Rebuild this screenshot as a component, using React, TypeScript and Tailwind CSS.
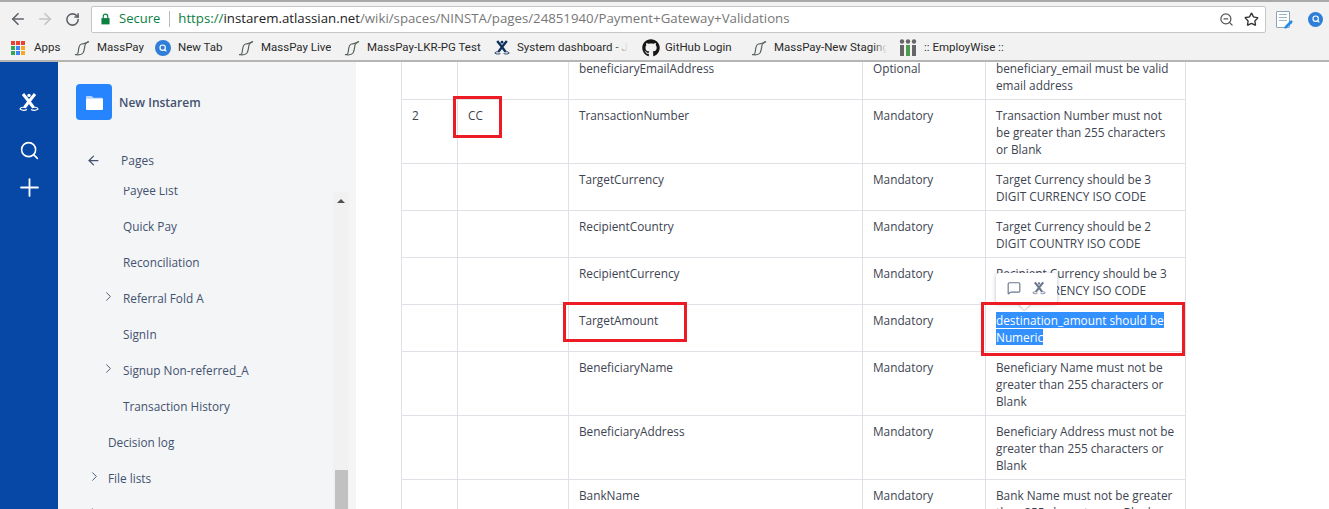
import React from 'react';
import { ArrowLeft, ArrowRight, RotateCw, Search, Star, ChevronRight, Plus, ZoomOut, MessageSquare, Pencil } from 'lucide-react';
import { FaGithub } from 'react-icons/fa';

const chromeFont = { fontFamily: 'Roboto, "Liberation Sans", sans-serif' };

function Atlassian({ className, color = '#fff' }: { className?: string; color?: string }) {
  return (
    <svg viewBox="0 0 20 20" className={className} fill="none" stroke={color}>
      <circle cx="10" cy="3.4" r="1.700" fill={color} stroke="none" />
      <path d="M4 2 10 9.500 14.500 15.500M16 2 10 9.500 5.500 15.500" strokeWidth="3" />
      <path d="M6 15.500C4 15 1.500 15.500 1 17c2 1.500 5 1.500 7 .5M14 15.500c2-.5 4.500 0 5 1.500-2 1.500-5 1.500-7 .5" strokeWidth="1.100" />
    </svg>
  );
}

function MassPayIcon() {
  return (
    <svg viewBox="0 0 16 16" className="w-[16px] h-[16px] shrink-0" fill="none" stroke="#59655c" strokeWidth="1.200">
      <path d="M1 14.500c2 .5 3-.5 3.300-3 .4-3.500.5-7 3.200-7.500 3-.5 5-.5 7.500-2.500" />
      <path d="M1 14.500c3 .5 6.500.5 8-1.500 1.500-2.500 1.500-5.500 2-8 .3-1.500 1.500-2.500 3.500-3.500" />
    </svg>
  );
}

function EmployWiseIcon() {
  return (
    <svg viewBox="0 0 18 17" className="w-[18px] h-[17px] shrink-0">
      <circle cx="3" cy="2.500" r="2.200" fill="#666" />
      <rect x="1" y="6" width="4" height="11" fill="#666" />
      <circle cx="9" cy="2.500" r="2.200" fill="#666" />
      <rect x="7" y="6" width="4" height="11" fill="#4f9a50" />
      <circle cx="15" cy="2.500" r="2.200" fill="#666" />
      <rect x="13" y="6" width="4" height="11" fill="#666" />
    </svg>
  );
}

function QuickSearchIcon({ size }: { size: string }) {
  return (
    <div className={`${size} shrink-0 rounded-full bg-[#2f7ed8] flex items-center justify-center`}>
      <Search className="w-[8px] h-[8px] text-white" strokeWidth={3.500} />
    </div>
  );
}

function Bookmark({ icon, label, width, clip }: { icon: React.ReactNode; label: string; width: string; clip?: string }) {
  return (
    <div className={`flex items-center shrink-0 ${width}`}>
      <div className="w-[23px] shrink-0 flex items-center">{icon}</div>
      <span className={`relative whitespace-nowrap overflow-hidden text-[11.5px] text-[#2a2a2a] ${clip ?? ''}`}>
        {label}
        {clip && <span className="absolute right-0 top-0 bottom-0 w-[14px] bg-gradient-to-r from-transparent to-[#f2f2f2]" />}
      </span>
    </div>
  );
}

const appsColors = ['#ea4335', '#ea4335', '#ea4335', '#34a853', '#4285f4', '#f9a825', '#34a853', '#4285f4', '#f9a825'];

function BrowserChrome() {
  return (
    <div className="h-[62px] bg-[#f2f2f2] shrink-0 flex flex-col" style={chromeFont}>
      <div className="h-[2px] bg-[#a9a9a9] shrink-0" />
      <div className="h-[31px] flex items-center pl-[9px] pt-[3px]">
        <ArrowLeft className="w-[18px] h-[18px] text-[#5f6368]" strokeWidth={2.200} />
        <ArrowRight className="w-[18px] h-[18px] ml-[9px] text-[#c4c4c4]" strokeWidth={2.200} />
        <RotateCw className="w-[15px] h-[15px] ml-[11px] text-[#5f6368]" strokeWidth={2.500} />
        <div className="ml-[11px] w-[1175px] h-[27px] bg-white border border-[#c6c6c6] rounded-[2px] flex items-center pl-[9px] pr-[6px]" style={{ fontFamily: '"Open Sans", sans-serif' }}>
          <svg viewBox="0 0 10 13" className="w-[9px] h-[12px] shrink-0">
            <path d="M2.500 6V3.500a2.500 2.500 0 0 1 5 0V6" fill="none" stroke="#0b8043" strokeWidth="1.300" />
            <rect x="0.500" y="5.500" width="9" height="7" fill="#0b8043" />
          </svg>
          <span className="ml-[9px] text-[13px] text-[#0b8043]">Secure</span>
          <span className="ml-[9px] w-px h-[16px] bg-[#bbb]" />
          <span className="ml-[8px] text-[13.25px] text-[#777] whitespace-nowrap">
            <span className="text-[#0b8043]">https://</span>
            <span className="text-[#222]">instarem.atlassian.net</span>
            /wiki/spaces/NINSTA/pages/24851940/Payment+Gateway+Validations
          </span>
          <div className="ml-auto flex items-center gap-[10px]">
            <ZoomOut className="w-[15px] h-[15px] text-[#555]" />
            <Star className="w-[15px] h-[15px] text-[#333]" strokeWidth={2.200} />
          </div>
        </div>
        <div className="relative ml-[10px] w-[14px] h-[17px] border border-[#8ba3b8] rounded-[1px] bg-white flex flex-col gap-[2px] p-[2px]">
          <span className="h-px bg-[#9db4c9]" />
          <span className="h-px bg-[#9db4c9]" />
          <span className="h-px bg-[#9db4c9]" />
          <Pencil className="absolute -right-[4px] -bottom-[2px] w-[9px] h-[9px] text-[#1e88e5]" fill="#1e88e5" />
        </div>
        <div className="ml-[18px]"><QuickSearchIcon size="w-[15px] h-[15px]" /></div>
      </div>
      <div className="h-[27px] flex items-center pl-[11px] pt-[2px]">
        <div className="w-[23px] shrink-0">
          <div className="grid grid-cols-3 gap-[1px] w-[14px]">
            {appsColors.map((c, i) => <span key={i} className="w-[4px] h-[4px]" style={{ background: c }} />)}
          </div>
        </div>
        <span className="w-[40px] shrink-0 text-[11.5px] text-[#2a2a2a]">Apps</span>
        <Bookmark width="w-[81px]" icon={<MassPayIcon />} label="MassPay" />
        <Bookmark width="w-[83px]" icon={<QuickSearchIcon size="w-[16px] h-[16px]" />} label="New Tab" />
        <Bookmark width="w-[106px]" icon={<MassPayIcon />} label="MassPay Live" />
        <Bookmark width="w-[150px]" icon={<MassPayIcon />} label="MassPay-LKR-PG Test" />
        <Bookmark width="w-[148px]" clip="w-[111px]" icon={<Atlassian className="w-[16px] h-[17px]" color="#0e2f5e" />} label="System dashboard - JIRA" />
        <Bookmark width="w-[109px]" icon={<FaGithub className="w-[18px] h-[18px] text-[#161614]" />} label="GitHub Login" />
        <Bookmark width="w-[148px]" clip="w-[113px]" icon={<MassPayIcon />} label="MassPay-New Staging" />
        <div className="w-[25px] shrink-0"><EmployWiseIcon /></div>
        <span className="text-[11.5px] text-[#2a2a2a] whitespace-nowrap">:: EmployWise ::</span>
      </div>
      <div className="mt-auto h-[2px] bg-[#b5b5b5] shrink-0" />
    </div>
  );
}

const navItems = [
  { label: 'Payee List', indent: 'pl-[65px]' },
  { label: 'Quick Pay', indent: 'pl-[65px]' },
  { label: 'Reconciliation', indent: 'pl-[65px]' },
  { label: 'Referral Fold A', indent: 'pl-[65px]', chevron: 'left-[43px]' },
  { label: 'SignIn', indent: 'pl-[65px]' },
  { label: 'Signup Non-referred_A', indent: 'pl-[65px]', chevron: 'left-[43px]' },
  { label: 'Transaction History', indent: 'pl-[65px]' },
  { label: 'Decision log', indent: 'pl-[50px]' },
  { label: 'File lists', indent: 'pl-[50px]', chevron: 'left-[29px]' },
  { label: '', indent: 'pl-[50px]', chevron: 'left-[29px]' },
];

function Sidebar() {
  return (
    <div className="w-[298px] shrink-0 bg-[#f4f5f7] text-[#42526e] flex flex-col overflow-hidden text-[11.8px]">
      <div className="flex items-center pl-[18px] pt-[22px] gap-[7px] shrink-0">
        <div className="w-[36px] h-[36px] rounded-[4px] bg-[#2684ff] flex items-center justify-center">
          <svg viewBox="0 0 20 18" className="w-[19px] h-[17px]">
            <path d="M1 3a1 1 0 0 1 1-1h5l2 2h9a1 1 0 0 1 1 1v1H1z" fill="#b3d4ff" />
            <rect x="1" y="5" width="18" height="12" rx="1" fill="#fff" />
          </svg>
        </div>
        <span className="font-semibold text-[12px] mt-px">New Instarem</span>
      </div>
      <div className="flex items-center pl-[28px] mt-[31px] h-[20px] shrink-0 text-[12px]">
        <ArrowLeft className="w-[15px] h-[15px] -mt-[2px]" />
        <span className="ml-[20px]">Pages</span>
      </div>
      <div className="flex flex-1 min-h-0 mt-[16px]">
        <div className="flex-1 overflow-hidden">
          <div className="-mt-[14px]">
            {navItems.map((n) => (
              <div key={n.label || 'next'} className={`relative h-[36px] flex items-center ${n.indent}`}>
                {n.chevron && <ChevronRight className={`absolute top-[8px] w-[15px] h-[15px] ${n.chevron}`} strokeWidth={1.500} />}
                {n.label}
              </div>
            ))}
          </div>
        </div>
        <div className="w-[16px] mt-[5px] mr-[7px] bg-[#f1f1f1] flex flex-col shrink-0">
          <span className="mt-[7px] ml-[4px] w-0 h-0 border-x-[4px] border-x-transparent border-b-[4px] border-b-[#505050]" />
          <div className="mt-auto ml-[2px] w-[13px] h-[39px] bg-[#c1c1c1]" />
        </div>
      </div>
    </div>
  );
}

const rows: [string, string, string, string, string, string][] = [
  ['', '', 'beneficiaryEmailAddress', 'Optional', 'beneficiary_email must be valid email address', 'h-[47px]'],
  ['2', 'CC', 'TransactionNumber', 'Mandatory', 'Transaction Number must not be greater than 255 characters or Blank', 'h-[64px]'],
  ['', '', 'TargetCurrency', 'Mandatory', 'Target Currency should be 3 DIGIT CURRENCY ISO CODE', 'h-[47px]'],
  ['', '', 'RecipientCountry', 'Mandatory', 'Target Currency should be 2 DIGIT COUNTRY ISO CODE', 'h-[47px]'],
  ['', '', 'RecipientCurrency', 'Mandatory', 'Recipient Currency should be 3 DIGIT CURRENCY ISO CODE', 'h-[47px]'],
  ['', '', 'TargetAmount', 'Mandatory', '', 'h-[47px]'],
  ['', '', 'BeneficiaryName', 'Mandatory', 'Beneficiary Name must not be greater than 255 characters or Blank', 'h-[64px]'],
  ['', '', 'BeneficiaryAddress', 'Mandatory', 'Beneficiary Address must not be greater than 255 characters or Blank', 'h-[64px]'],
  ['', '', 'BankName', 'Mandatory', 'Bank Name must not be greater than 255 characters or Blank', 'h-[64px]'],
];

const cell = 'border border-[#dfe1e6] align-top px-[10px] pt-[7px] pb-0';

function ContentTable() {
  return (
    <div className="flex-1 relative overflow-hidden bg-white text-[11.8px] leading-[17px] text-[#3d4451]">
      <table className="table-fixed border-collapse w-[784px] ml-[45px] -mt-[10px]">
        <colgroup>
          <col className="w-[56px]" />
          <col className="w-[111px]" />
          <col className="w-[294px]" />
          <col className="w-[123px]" />
          <col className="w-[200px]" />
        </colgroup>
        <tbody>
          {rows.map((r) => (
            <tr key={r[2]} className={r[5]}>
              <td className={cell}>{r[0]}</td>
              <td className={cell}>{r[1]}</td>
              <td className={cell}>{r[2]}</td>
              <td className={cell}>{r[3]}</td>
              <td className={cell}>
                {r[2] === 'TargetAmount' ? (
                  <span className="bg-[#3390ff] text-white">destination_amount should be Numeric</span>
                ) : r[4]}
              </td>
            </tr>
          ))}
        </tbody>
      </table>

      {/* selection popup, caret runs under the red box */}
      <div className="absolute left-[640px] top-[211px] w-[61px] h-[30px] bg-white rounded-[3px] shadow-[0_1px_4px_rgba(9,30,66,0.3)] flex items-center justify-center gap-[11px]">
        <MessageSquare className="w-[14px] h-[14px] text-[#6b778c]" />
        <Atlassian className="w-[14px] h-[14px]" color="#6b778c" />
        <span className="absolute left-[24px] top-[26px] w-[9px] h-[9px] rotate-45 bg-white shadow-[1px_1px_2px_rgba(9,30,66,0.2)]" />
      </div>

      {/* red annotation boxes */}
      <div className="absolute left-[97px] top-[34px] w-[49px] h-[42px] border-[3px] border-[#ed1c24]" />
      <div className="absolute left-[207px] top-[240px] w-[124px] h-[40px] border-[3px] border-[#ed1c24]" />
      <div className="absolute left-[625px] top-[240px] w-[204px] h-[54px] border-[3px] border-[#ed1c24]" />
    </div>
  );
}

export default function App() {
  return (
    <div className="w-[1329px] h-[509px] flex flex-col overflow-hidden bg-white" style={{ fontFamily: '"Open Sans", "Noto Sans", sans-serif' }}>
      <BrowserChrome />
      <div className="flex flex-1 min-h-0">
        <div className="w-[58px] shrink-0 bg-[#0747a6] flex flex-col items-center pt-[30px] text-white">
          <Atlassian className="w-[20px] h-[20px]" />
          <Search className="w-[21px] h-[21px] mt-[28px]" strokeWidth={1.800} />
          <Plus className="w-[29px] h-[29px] mt-[12px]" strokeWidth={1.500} />
        </div>
        <Sidebar />
        <ContentTable />
      </div>
    </div>
  );
}
